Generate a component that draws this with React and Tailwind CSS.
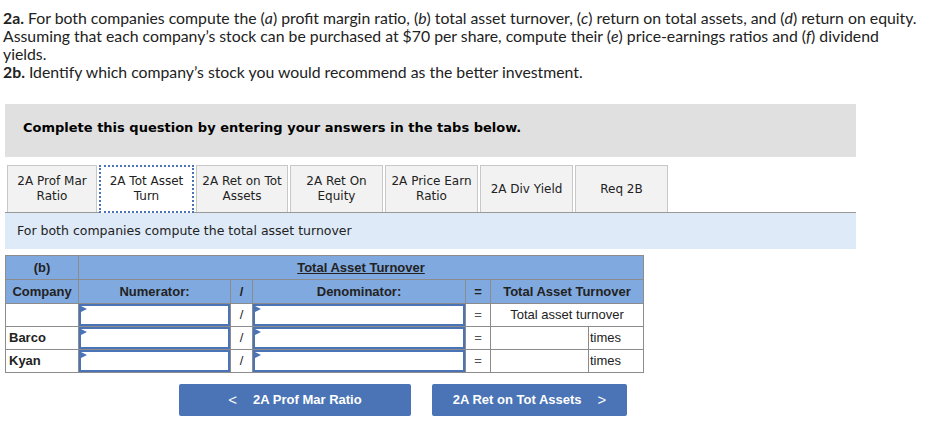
const tabs = [
  { label: ["2A Prof Mar", "Ratio"], w: "w-[90px]" },
  { label: ["2A Tot Asset", "Turn"], w: "w-[95px]", active: true },
  { label: ["2A Ret on Tot", "Assets"], w: "w-[92px]" },
  { label: ["2A Ret On", "Equity"], w: "w-[93px]" },
  { label: ["2A Price Earn", "Ratio"], w: "w-[93px]" },
  { label: ["2A Div Yield"], w: "w-[93px]" },
  { label: ["Req 2B"], w: "w-[93px]" },
];

function InputCell() {
  return (
    <td className="border border-[#8c8c8c] p-0 h-[23px]">
      <div className="relative h-[22px] border-2 border-[#4a74b5]">
        <span className="absolute left-0 top-0 w-0 h-0 border-t-[3px] border-b-[3px] border-l-[6px] border-t-transparent border-b-transparent border-l-[#4a74b5]" />
      </div>
    </td>
  );
}

export default function App() {
  const rows = [
    { name: "", first: true },
    { name: "Barco" },
    { name: "Kyan" },
  ];

  return (
    <div className="w-[944px] h-[428px] bg-white overflow-hidden relative">
      {/* Question */}
      <div className="pl-[3px] pt-[9px] text-[15.8px] leading-[18px] text-[#222] font-['Lato',sans-serif] whitespace-nowrap">
        <p>
          <b>2a.</b> For both companies compute the (<i>a</i>) profit margin ratio, (<i>b</i>) total asset turnover, (<i>c</i>) return on total assets, and (<i>d</i>) return on equity.
          <br />
          Assuming that each company’s stock can be purchased at $70 per share, compute their (<i>e</i>) price-earnings ratios and (<i>f</i>) dividend
          <br />
          yields.
        </p>
        <p>
          <b>2b.</b> Identify which company’s stock you would recommend as the better investment.
        </p>
      </div>

      {/* Instructions box */}
      <div className="ml-[5px] mt-[23px] w-[851px] h-[53px] bg-[#e0e0e0] pl-[18px] pt-[14px] font-['DejaVu_Sans',sans-serif] font-bold text-[13px] text-black">
        Complete this question by entering your answers in the tabs below.
      </div>

      {/* Tabs */}
      <div className="ml-[5px] mt-[8px] w-[851px] border-b border-[#999] flex gap-[2px] pl-[2px] h-[48px]">
        {tabs.map((t, i) => (
          <div
            key={i}
            className={
              t.active
                ? `${t.w} h-[48px] bg-white border-2 border-dotted border-[#4a74b5] flex flex-col items-center justify-center text-[12px] leading-[15px] text-[#222] font-['DejaVu_Sans',sans-serif] -mb-px`
                : `${t.w} h-[47px] bg-[#f2f2f2] border border-b-0 border-[#c8c8c8] flex flex-col items-center justify-center text-[12px] leading-[15px] text-[#222] font-['DejaVu_Sans',sans-serif]`
            }
          >
            {t.label.map((l, j) => (
              <span key={j}>{l}</span>
            ))}
          </div>
        ))}
      </div>

      <div className="ml-[5px] w-[851px] h-[36px] bg-[#deeaf7] pl-[12px] flex items-center font-['DejaVu_Sans',sans-serif] text-[12.5px] text-[#222]">
        For both companies compute the total asset turnover
      </div>

      {/* Table */}
      <table className="ml-[5px] mt-[6px] table-fixed border-collapse w-[638px] font-['Liberation_Sans',Arial,sans-serif] text-[13px] text-[#222]">
        <colgroup>
          <col className="w-[73px]" />
          <col className="w-[152px]" />
          <col className="w-[22px]" />
          <col className="w-[213px]" />
          <col className="w-[25px]" />
          <col className="w-[98px]" />
          <col className="w-[55px]" />
        </colgroup>
        <thead>
          <tr className="bg-[#80a9df] h-[24px]">
            <th className="border border-[#8c8c8c] font-bold text-center">(b)</th>
            <th colSpan={6} className="border border-[#8c8c8c] font-bold text-center underline">
              Total Asset Turnover
            </th>
          </tr>
          <tr className="bg-[#80a9df] h-[24px]">
            <th className="border border-[#8c8c8c] font-bold text-center">Company</th>
            <th className="border border-[#8c8c8c] font-bold text-center">Numerator:</th>
            <th className="border border-[#8c8c8c] font-bold text-center">/</th>
            <th className="border border-[#8c8c8c] font-bold text-center">Denominator:</th>
            <th className="border border-[#8c8c8c] font-bold text-center">=</th>
            <th colSpan={2} className="border border-[#8c8c8c] font-bold text-center">
              Total Asset Turnover
            </th>
          </tr>
        </thead>
        <tbody>
          {rows.map((r, i) => (
            <tr key={i} className="h-[23px]">
              <td className="border border-[#8c8c8c] font-bold pl-[3px]">{r.name}</td>
              <InputCell />
              <td className="border border-[#8c8c8c] text-center">/</td>
              <InputCell />
              <td className="border border-[#8c8c8c] text-center text-[#555]">=</td>
              {r.first ? (
                <td colSpan={2} className="border border-[#8c8c8c] text-center">
                  Total asset turnover
                </td>
              ) : (
                <>
                  <td className="border border-[#8c8c8c]"></td>
                  <td className="border border-[#8c8c8c] pl-[1px]">times</td>
                </>
              )}
            </tr>
          ))}
        </tbody>
      </table>

      {/* Nav buttons */}
      <div className="ml-[179px] mt-[11px] flex gap-[21px] font-['Liberation_Sans',Arial,sans-serif] font-bold text-[13px] text-white">
        <button className="w-[232px] h-[32px] bg-[#4a74b5] rounded-[2px] flex items-center justify-center gap-[16px]">
          <span className="font-normal text-[15px]">&lt;</span>
          <span>2A Prof Mar Ratio</span>
        </button>
        <button className="w-[195px] h-[32px] bg-[#4a74b5] rounded-[2px] flex items-center justify-center gap-[16px]">
          <span>2A Ret on Tot Assets</span>
          <span className="font-normal text-[15px]">&gt;</span>
        </button>
      </div>
    </div>
  );
}
